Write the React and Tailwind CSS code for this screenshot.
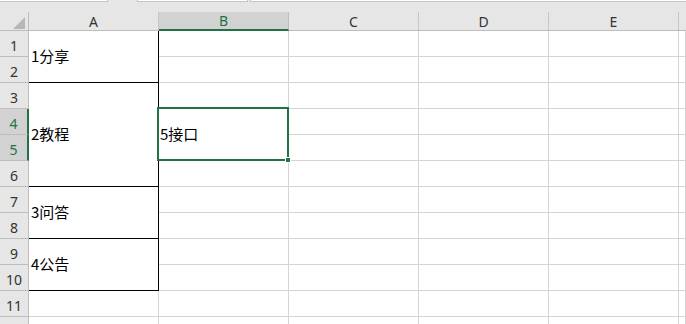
import React from 'react';

const COLS = ['A', 'B', 'C', 'D', 'E'];
const ROWS = [1, 2, 3, 4, 5, 6, 7, 8, 9, 10, 11, 12];
const SEL_ROWS = [4, 5];

// merged cells in column A, with black outline
const MERGED = [
  { row: 1, span: 2, text: '1分享' },
  { row: 3, span: 4, text: '2教程' },
  { row: 7, span: 2, text: '3问答' },
  { row: 9, span: 2, text: '4公告' },
];

const rowStart = ['', 'row-start-1', 'row-start-2', 'row-start-3', 'row-start-4', 'row-start-5', 'row-start-6', 'row-start-7', 'row-start-8', 'row-start-9', 'row-start-10', 'row-start-11', 'row-start-12'];
const rowSpan = ['', 'row-span-1', 'row-span-2', 'row-span-3', 'row-span-4'];
const colStart = ['col-start-1', 'col-start-2', 'col-start-3', 'col-start-4', 'col-start-5', 'col-start-6', 'col-start-7'];

function inMerged(r, c) {
  if (c === 1) return MERGED.some(m => r >= m.row && r < m.row + m.span);
  if (c === 2) return r === 4 || r === 5;
  return false;
}

export default function App() {
  return (
    <div className="w-[686px] h-[324px] overflow-hidden bg-[#e6e6e6] font-['Noto_Sans_CJK_SC',sans-serif]">
      {/* tab strip */}
      <div className="flex h-[2px]">
        <div className="w-[108px] bg-white border-b border-r border-[#c6c6c6]" />
        <div className="w-[29px]" />
        <div className="w-[111px] bg-white border-b border-x border-[#c6c6c6]" />
        <div className="w-[2px]" />
        <div className="flex-1 bg-white border-b border-l border-[#c6c6c6]" />
      </div>

      {/* column headers */}
      <div className="flex h-[29px] border-b border-[#bdbdbd] font-['Noto_Sans',sans-serif] text-[14px] text-[#333]">
        <div className="w-[29px] flex flex-col">
          <div className="h-[10px]" />
          <div className="flex-1 border-r border-[#bdbdbd] flex items-end justify-end pr-[3px] pb-[1px]">
            <svg width="12" height="12" viewBox="0 0 12 12"><path d="M12 0 L12 12 L0 12 Z" fill="#b7b7b7" /></svg>
          </div>
        </div>
        {COLS.map(c => {
          const sel = c === 'B';
          return (
            <div key={c} className="w-[130px] flex flex-col">
              <div className="h-[10px]" />
              <div className={`flex-1 flex items-end justify-center pb-[1px] leading-none border-r ${sel ? 'bg-[#d2d2d2] border-[#bdbdbd] border-b-2 border-b-[#217346] text-[#217346] -mb-[1px]' : 'border-[#c6c6c6]'}`}>
                {c}
              </div>
            </div>
          );
        })}
        <div className="flex-1" />
      </div>

      {/* sheet body */}
      <div className="grid grid-cols-[29px_repeat(5,130px)_7px] auto-rows-[26px] bg-white">
        {ROWS.map(r => {
          const sel = SEL_ROWS.includes(r);
          return (
            <div
              key={'h' + r}
              className={`col-start-1 ${rowStart[r]} flex items-end justify-center pb-[3px] leading-none font-['Noto_Sans',sans-serif] text-[14px] border-b ${sel ? 'bg-[#d2d2d2] text-[#217346] border-b-[#bdbdbd] border-r-2 border-r-[#217346]' : 'bg-[#e6e6e6] text-[#333] border-[#bdbdbd] border-r border-r-[#bdbdbd]'}`}
            >
              {r < 12 ? r : ''}
            </div>
          );
        })}

        {ROWS.map(r =>
          [1, 2, 3, 4, 5, 6].filter(c => !inMerged(r, c)).map(c => (
            <div key={r + '-' + c} className={`${colStart[c]} ${rowStart[r]} border-r border-b border-[#d4d4d4]`} />
          ))
        )}

        {MERGED.map(m => (
          <div
            key={m.text}
            className={`col-start-2 ${rowStart[m.row]} ${rowSpan[m.span]} border-r border-b border-black flex items-center pl-[2px] text-[15px] text-black`}
          >
            {m.text}
          </div>
        ))}

        <div className="col-start-3 row-start-4 row-span-2 relative border-r border-b border-[#d4d4d4] flex items-center pl-[1px] text-[15px] text-black">
          5接口
          <div className="absolute -left-[2px] -top-[2px] w-[132px] h-[54px] border-2 border-[#217346]" />
          <div className="absolute left-[126px] top-[48px] w-[6px] h-[6px] bg-[#217346] border border-white" />
        </div>
      </div>
    </div>
  );
}
